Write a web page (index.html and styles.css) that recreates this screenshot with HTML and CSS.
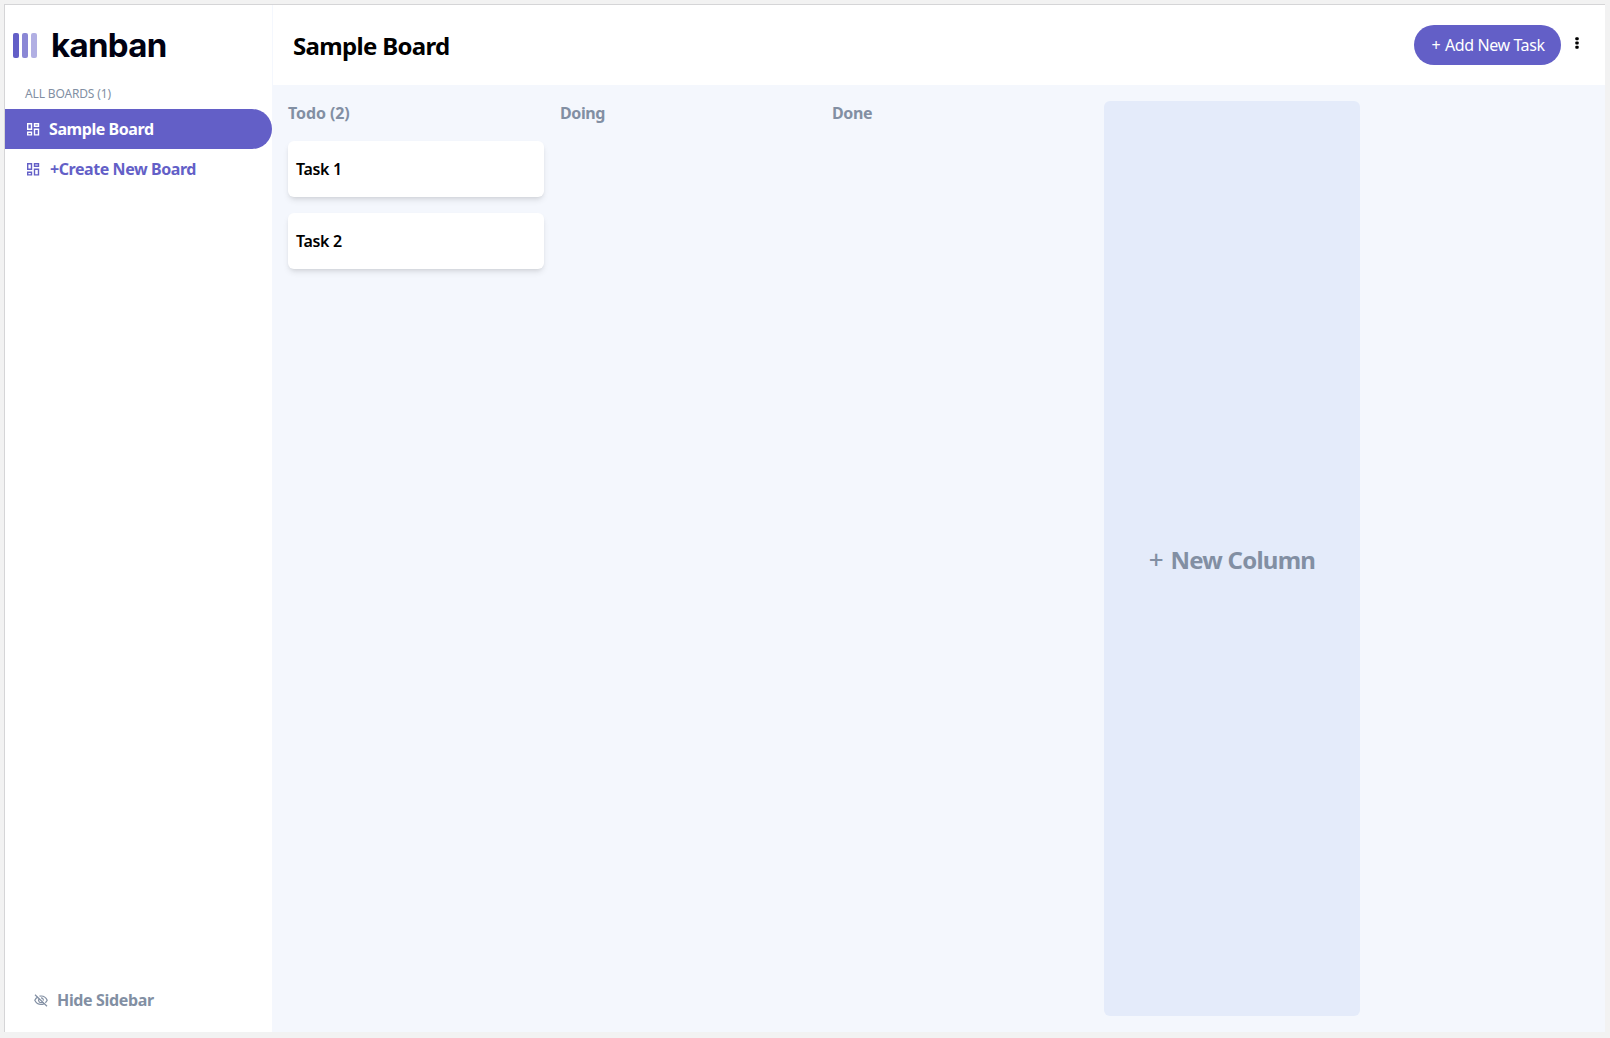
FILE: index.html
```html
<!DOCTYPE html>
<html lang="en">
<head>
<meta charset="utf-8">
<title>Kanban</title>
<link rel="stylesheet" href="styles.css">
</head>
<body>
<div class="app">
  <aside class="sidebar">
    <div class="logo">
      <svg width="24" height="25" viewBox="0 0 24 25" aria-hidden="true"><g fill="#635fc7"><rect width="6" height="25" rx="2"/><rect x="9" width="6" height="25" rx="2" opacity=".75"/><rect x="18" width="6" height="25" rx="2" opacity=".5"/></g></svg>
      <span class="logo-name">kanban</span>
    </div>
    <h2 class="boards-title">ALL BOARDS (1)</h2>
    <nav class="boards">
      <a class="board board-active">
        <svg class="board-icon" viewBox="0 0 13 13" aria-hidden="true"><path d="M.7.7h3.800v5.600H.7zM7.500.7h4v2.600h-4zM7.500 6.300h4v5.600h-4zM.7 9.300h3.800v2.600H.7z"/></svg>
        <span>Sample Board</span>
      </a>
      <a class="board board-create">
        <svg class="board-icon" viewBox="0 0 13 13" aria-hidden="true"><path d="M.7.7h3.800v5.600H.7zM7.500.7h4v2.600h-4zM7.500 6.300h4v5.600h-4zM.7 9.300h3.800v2.600H.7z"/></svg>
        <span>+Create New Board</span>
      </a>
    </nav>
    <button class="hide">
      <svg class="hide-icon" width="14" height="13" viewBox="0 0 14 13" aria-hidden="true"><path d="M1 .7 13 12.3M4 2.9C2.5 3.700 1.400 5 .8 6.300c1.300 2.700 3.500 4.200 6.200 4.200 1 0 1.900-.2 2.700-.6M5.500 2.200C9 1.500 11.800 3.200 13.200 6.300c-.5 1-1.100 1.800-1.900 2.500M5.100 4.700c-1.600 2.200.7 4.900 3.200 3.500M7 3.900c1.500 0 2.600 1.300 2.300 2.800"/></svg>
      <span>Hide Sidebar</span>
    </button>
  </aside>
  <div class="content">
    <header class="header">
      <h1 class="title">Sample Board</h1>
      <div class="actions">
        <button class="add"><span class="add-plus">+</span> Add New Task</button>
        <svg class="dots" width="4" height="12" viewBox="0 0 4 12" aria-hidden="true"><rect x=".3" y=".3" width="3.400" height="3" rx="1"/><rect x=".3" y="4.500" width="3.400" height="3" rx="1"/><rect x=".3" y="8.700" width="3.400" height="3" rx="1"/></svg>
      </div>
    </header>
    <main class="columns">
      <section class="column">
        <h3 class="column-name column-todo">Todo (2)</h3>
        <article class="card">Task 1</article>
        <article class="card">Task 2</article>
      </section>
      <section class="column"><h3 class="column-name">Doing</h3></section>
      <section class="column"><h3 class="column-name">Done</h3></section>
      <button class="new-column"><span class="plus">+</span> New Column</button>
    </main>
  </div>
</div>
</body>
</html>
```
FILE: styles.css
```css
* { box-sizing: border-box; }
body {
  margin: 0;
  height: 1038px;
  padding: 4px 5px 6px 4px;
  background: #f2f2f2;
  font-family: "Noto Sans", "Open Sans", sans-serif;
  font-size: 16px;
  line-height: 24px;
  overflow: hidden;
}
h1, h2, h3 { margin: 0; }
button { border: 0; padding: 0; background: none; font: inherit; color: inherit; }
svg { flex: none; display: block; }
span { white-space: nowrap; }

.app {
  display: flex;
  height: 1028px;
  border-top: 1px solid #d5d5d7;
  border-left: 1px solid #d5d5d7;
}
.sidebar {
  display: flex;
  flex-direction: column;
  width: 268px;
  border-right: 1px solid #f4f7fd;
  background: #fff;
}
.logo { display: flex; align-items: center; height: 80px; padding-left: 8px; gap: 14px; }
.logo-name {
  font: 700 33px/40px Inter, sans-serif;
  letter-spacing: -0.7px;
  color: #000112;
}
.boards-title { height: 24px; padding: 1px 0 0 20px; color: #828fa3; font-size: 12px; font-weight: 400; line-height: 16px; letter-spacing: -0.15px; }
.board { display: flex; align-items: center; height: 40px; padding-left: 22px; gap: 10px; color: #635fc7; font-weight: 700; letter-spacing: -0.43px; }
.board-create { gap: 11px; }
.board-active { background: #635fc7; color: #fff; border-radius: 0 20px 20px 0; }
.board-icon { width: 13px; height: 13px; margin-right: -1px; fill: none; stroke: currentColor; stroke-width: 1.4; }
.hide { display: flex; align-items: center; margin: auto 0 20px 29px; gap: 9px; color: #828fa3; font-weight: 700; letter-spacing: -0.35px; }
.hide-icon { fill: none; stroke: currentColor; stroke-width: 1.2; }

.content { display: flex; flex: 1; flex-direction: column; background: #f4f7fd; }
.header { display: flex; align-items: center; justify-content: space-between; height: 80px; padding: 0 26px 0 20px; background: #fff; }
.title { padding-top: 2px; font-size: 24px; line-height: 32px; letter-spacing: -0.67px; }
.actions { display: flex; align-items: center; gap: 14px; }
.add { width: 147px; height: 40px; padding-left: 1px; border-radius: 20px; background: #635fc7; color: #fff; letter-spacing: -0.4px; }
.add-plus { margin-right: 1px; }
.dots { margin-bottom: 4px; }
.columns { display: flex; flex: 1; gap: 16px; padding: 16px 15px; }
.column { display: flex; flex-direction: column; gap: 16px; width: 256px; }
.column-name { height: 24px; color: #828fa3; font-size: 16px; letter-spacing: -0.4px; }
.column-todo { letter-spacing: -0.1px; }
.card {
  height: 56px;
  padding: 16px 8px;
  border-radius: 6px;
  background: #fff;
  box-shadow: 0 4px 6px -1px #0000001a, 0 2px 4px -2px #0000001a;
  font-weight: 600;
  letter-spacing: -0.35px;
}
.new-column { width: 256px; padding-top: 2px; border-radius: 6px; background: #e4ebfa; color: #828fa3; font-size: 24px; font-weight: 700; letter-spacing: -0.75px; }
.plus { margin-right: 2px; font-weight: 500; font-size: 26px; }
```
